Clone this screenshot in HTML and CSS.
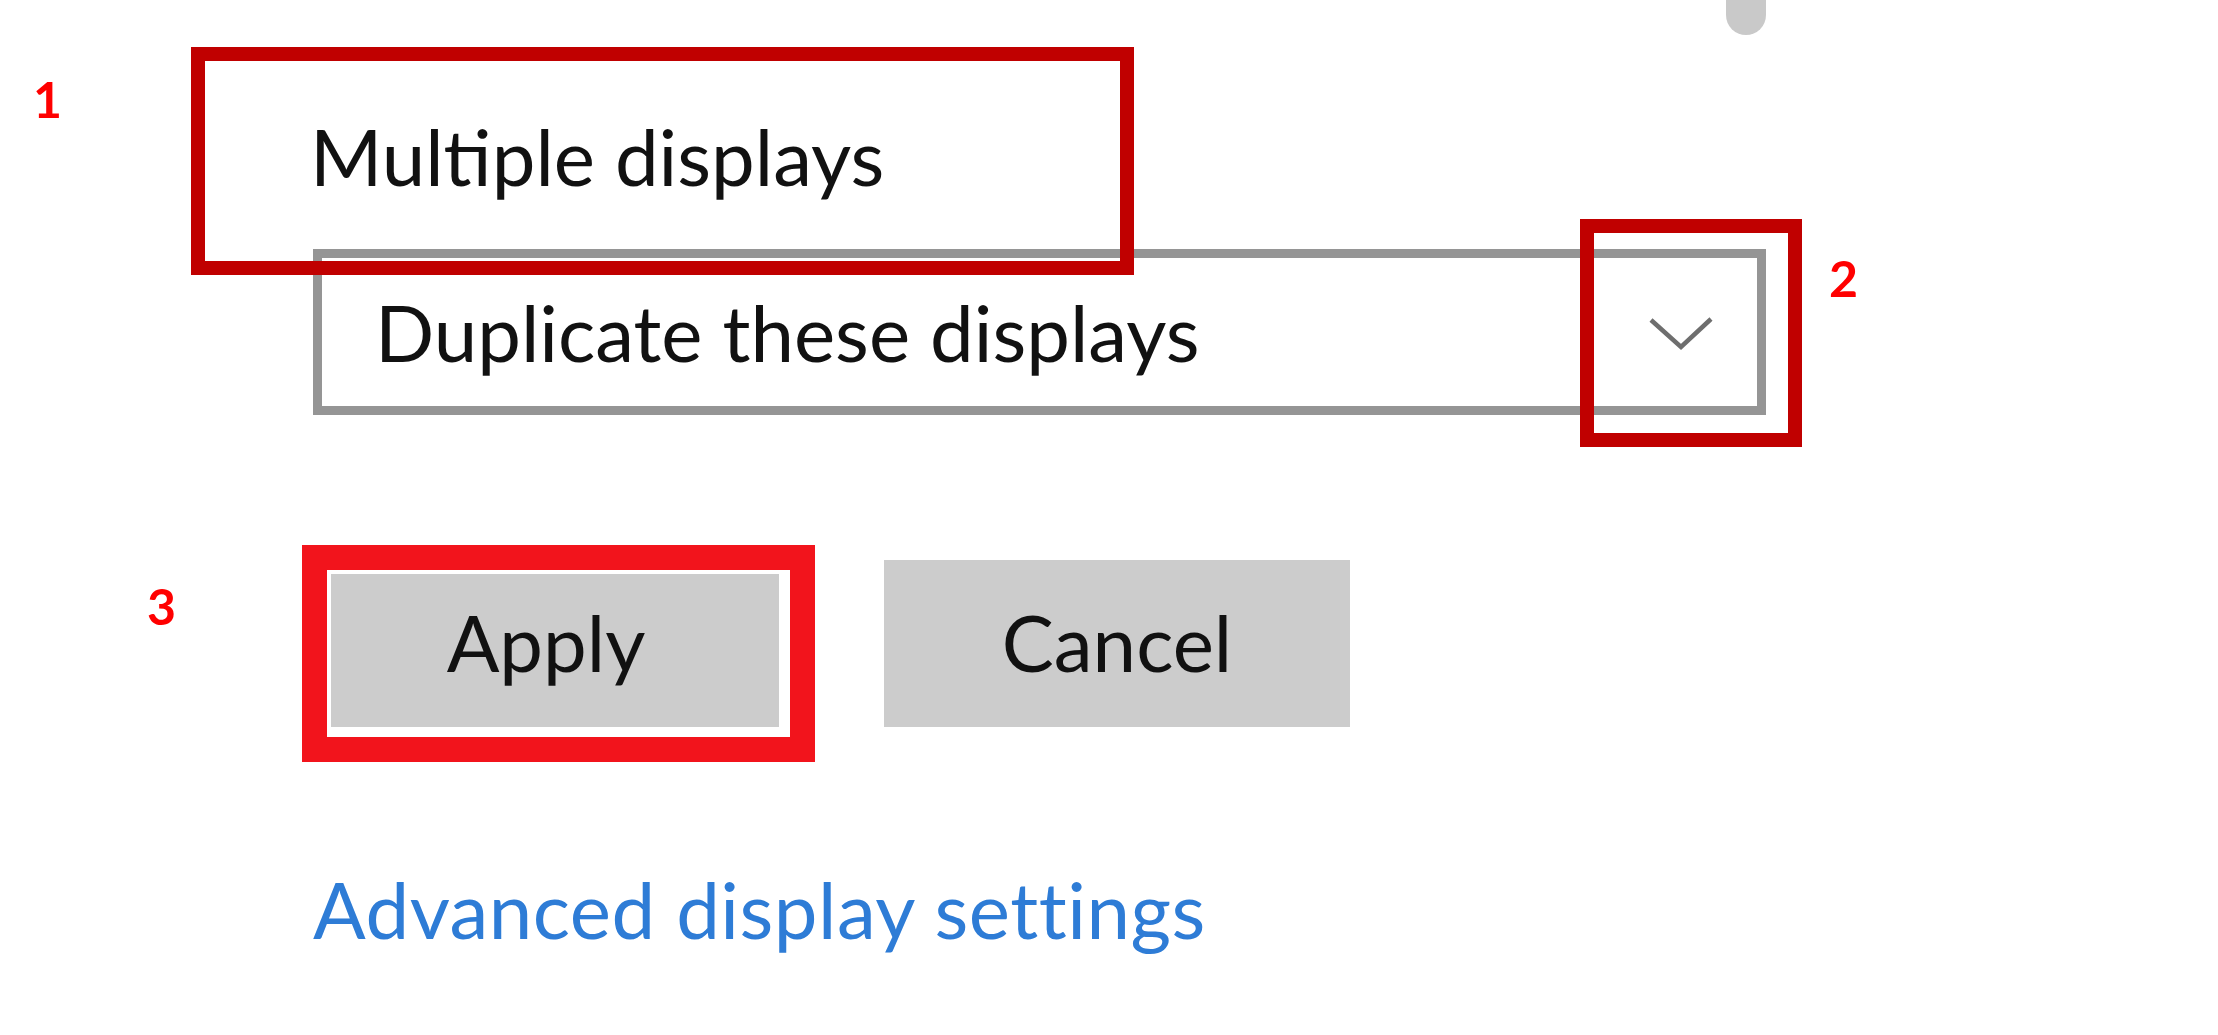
FILE: index.html
```html
<!DOCTYPE html>
<html lang="en">
<head>
<meta charset="utf-8">
<title>Multiple displays</title>
<link rel="stylesheet" href="styles.css">
</head>
<body>
<div class="scroll-thumb"></div>
<main class="panel">
  <h2 class="section-title">Multiple displays</h2>
  <div class="combo">
    <span class="combo-text">Duplicate these displays</span>
    <svg class="chevron" width="64" height="34" viewBox="0 0 64 34" aria-hidden="true">
      <polyline points="2,3 32,30 62,2" fill="none" stroke="#6e6e6e" stroke-width="4.5" stroke-linejoin="miter"/>
    </svg>
  </div>
  <div class="actions">
    <button class="btn">Apply</button>
    <button class="btn">Cancel</button>
  </div>
  <a class="link" href="#">Advanced display settings</a>
</main>

<div class="mark mark-1"></div>
<div class="mark mark-2"></div>
<div class="mark mark-3"></div>
<span class="num num-1">1</span>
<span class="num num-2">2</span>
<span class="num num-3">3</span>
</body>
</html>
```
FILE: styles.css
```css
html, body {
  margin: 0;
  padding: 0;
  background: #ffffff;
}
body {
  position: relative;
  width: 2218px;
  height: 1035px;
  overflow: hidden;
  font-family: "Lato", "Open Sans", sans-serif;
  color: #111111;
}
.panel {
  display: flex;
  flex-direction: column;
  align-items: flex-start;
  padding: 110px 0 0 313px;
}
.section-title {
  margin: 0 0 0 -3px;
  font-size: 78px;
  font-weight: 400;
  line-height: 1.2;
  color: #111111;
}
.combo {
  margin-top: 45px;
  box-sizing: border-box;
  width: 1453px;
  height: 166px;
  border: 9px solid #959595;
  display: flex;
  align-items: center;
  justify-content: space-between;
  padding: 0 44px 0 53px;
  background: #fff;
}
.combo-text {
  font-size: 78px;
  line-height: 1.2;
  color: #111111;
  margin-top: 2px;
}
.chevron {
  display: block;
  margin-top: 4px;
}
.actions {
  margin-top: 145px;
  display: flex;
  gap: 105px;
}
.btn {
  box-sizing: border-box;
  width: 466px;
  height: 167px;
  border: 0;
  padding: 0;
  background: #cccccc;
  font-family: "Lato", "Open Sans", sans-serif;
  font-size: 78px;
  line-height: 1.2;
  color: #111111;
}
.link {
  margin-top: 136px;
  font-size: 78px;
  line-height: 1.2;
  letter-spacing: 0.5px;
  color: #2e7cd6;
  text-decoration: none;
}
.scroll-thumb {
  position: absolute;
  left: 1726px;
  top: 0;
  width: 40px;
  height: 35px;
  border-radius: 0 0 20px 20px;
  background: #c9c9c9;
}
.mark {
  position: absolute;
  box-sizing: border-box;
}
.mark-1 {
  left: 191px;
  top: 47px;
  width: 943px;
  height: 228px;
  border: 14px solid #c00000;
}
.mark-2 {
  left: 1580px;
  top: 219px;
  width: 222px;
  height: 228px;
  border: 14px solid #c00000;
}
.mark-3 {
  left: 302px;
  top: 545px;
  width: 513px;
  height: 217px;
  border: 25px solid #f2141c;
  box-shadow: inset 0 0 0 4px #ffffff;
}
.num {
  position: absolute;
  font-family: "Lato", sans-serif;
  font-weight: 700;
  font-size: 50px;
  line-height: 1;
  color: #ff0000;
}
.num-1 { left: 33px; top: 74px; }
.num-2 { left: 1829px; top: 253px; }
.num-3 { left: 147px; top: 581px; }
```
